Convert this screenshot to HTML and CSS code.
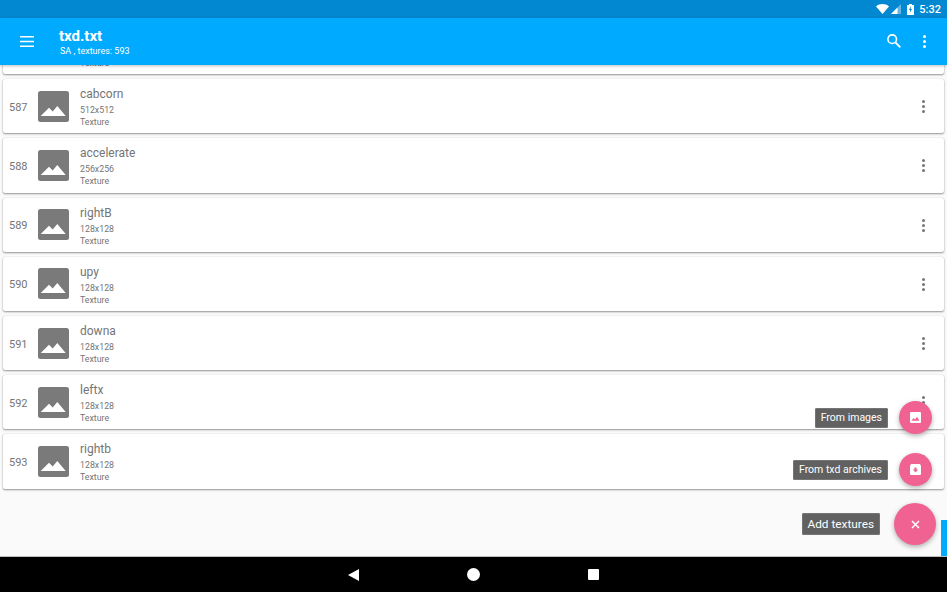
FILE: index.html
```html
<!DOCTYPE html>
<html lang="en">
<head>
    <meta charset="UTF-8">
    <title>txd.txt</title>
    <link rel="stylesheet" href="styles.css">
</head>
<body>
    <div class="statusBar">
        <svg class="wifi" width="13" height="10" viewBox="0 0 13 10"><path d="M0 2.400C1.800 .8 4 0 6.500 0S11.200 .8 13 2.400L6.500 10z" fill="#fff"/></svg>
        <svg class="signal" width="10" height="10" viewBox="0 0 10 10"><path d="M10 0v10H0z" fill="#fff" fill-opacity=".4"/><path d="M6.500 3.500V10H0z" fill="#fff"/></svg>
        <svg class="battery" width="7" height="11" viewBox="0 0 7 11"><path d="M2 0h3v1h2v10H0V1h2z" fill="#fff"/><path d="M4 2 2 6h1.200l-.4 3L5 5H3.700z" fill="#0288d1"/></svg>
        <span class="clock">5:32</span>
    </div>
    <header class="appBar">
        <a href="#" class="menuBtn">
            <svg width="14" height="11" viewBox="0 0 14 11"><path d="M0 0h14v1.600H0zM0 4.700h14v1.600H0zM0 9.400h14V11H0z" fill="#fff"/></svg>
        </a>
        <div class="appTitle">
            <h1>txd.txt</h1>
            <p>SA , textures: 593</p>
        </div>
        <a href="#" class="searchBtn">
            <svg width="14" height="14" viewBox="0 0 14 14"><circle cx="5.200" cy="5.200" r="4.300" fill="none" stroke="#fff" stroke-width="1.600"/><path d="M8.400 8.400 13.300 13.300" stroke="#fff" stroke-width="1.800"/></svg>
        </a>
        <a href="#" class="moreBtn"><span></span><span></span><span></span></a>
    </header>
    <main class="content">
        <ul class="textureList">
            <!-- scrolled under the app bar, only the last line shows -->
            <li class="card cutoff">
                <div class="info"><p>Texture</p></div>
            </li>
            <li class="card">
                <span class="num">587</span>
                <svg class="thumb" viewBox="0 0 31 31"><use href="#pic"/></svg>
                <div class="info"><h2>cabcorn</h2><p>512x512</p><p>Texture</p></div>
                <a href="#" class="moreBtn dark"><span></span><span></span><span></span></a>
            </li>
            <li class="card">
                <span class="num">588</span>
                <svg class="thumb" viewBox="0 0 31 31"><use href="#pic"/></svg>
                <div class="info"><h2>accelerate</h2><p>256x256</p><p>Texture</p></div>
                <a href="#" class="moreBtn dark"><span></span><span></span><span></span></a>
            </li>
            <li class="card">
                <span class="num">589</span>
                <svg class="thumb" viewBox="0 0 31 31"><use href="#pic"/></svg>
                <div class="info"><h2>rightB</h2><p>128x128</p><p>Texture</p></div>
                <a href="#" class="moreBtn dark"><span></span><span></span><span></span></a>
            </li>
            <li class="card">
                <span class="num">590</span>
                <svg class="thumb" viewBox="0 0 31 31"><use href="#pic"/></svg>
                <div class="info"><h2>upy</h2><p>128x128</p><p>Texture</p></div>
                <a href="#" class="moreBtn dark"><span></span><span></span><span></span></a>
            </li>
            <li class="card">
                <span class="num">591</span>
                <svg class="thumb" viewBox="0 0 31 31"><use href="#pic"/></svg>
                <div class="info"><h2>downa</h2><p>128x128</p><p>Texture</p></div>
                <a href="#" class="moreBtn dark"><span></span><span></span><span></span></a>
            </li>
            <li class="card">
                <span class="num">592</span>
                <svg class="thumb" viewBox="0 0 31 31"><use href="#pic"/></svg>
                <div class="info"><h2>leftx</h2><p>128x128</p><p>Texture</p></div>
                <a href="#" class="moreBtn dark"><span></span><span></span><span></span></a>
            </li>
            <li class="card">
                <span class="num">593</span>
                <svg class="thumb" viewBox="0 0 31 31"><use href="#pic"/></svg>
                <div class="info"><h2>rightb</h2><p>128x128</p><p>Texture</p></div>
                <a href="#" class="moreBtn dark"><span></span><span></span><span></span></a>
            </li>
        </ul>
        <div class="scrollThumb"></div>
        <div class="fabMenu">
            <div class="fabRow one">
                <span class="fabLabel">From images</span>
                <a href="#" class="fab"><svg width="11" height="11" viewBox="0 0 11 11"><path d="M1 0h9a1 1 0 0 1 1 1v9a1 1 0 0 1-1 1H1a1 1 0 0 1-1-1V1a1 1 0 0 1 1-1z" fill="#fff"/><path d="M1.500 8.800 3.600 6l1.500 1.500L7 4.800l2.500 4z" fill="#f06292"/></svg></a>
            </div>
            <div class="fabRow two">
                <span class="fabLabel">From txd archives</span>
                <a href="#" class="fab"><svg width="11" height="11" viewBox="0 0 11 11"><path d="M1.200 0h8.600L11 1.500V10a1 1 0 0 1-1 1H1a1 1 0 0 1-1-1V1.500z" fill="#fff"/><path d="M4.500 3.500h2V5.500H8.200L5.500 8.500 2.800 5.500h1.700z" fill="#f06292"/></svg></a>
            </div>
            <div class="fabRow main">
                <span class="fabLabel">Add textures</span>
                <a href="#" class="fab"><svg width="9" height="9" viewBox="0 0 9 9"><path d="M1 1l7 7M8 1 1 8" stroke="#fff" stroke-width="1.500"/></svg></a>
            </div>
        </div>
    </main>
    <nav class="navBar">
        <svg width="11" height="12" viewBox="0 0 11 12"><path d="M11 0v12L0 6z" fill="#fff"/></svg>
        <span class="navHome"></span>
        <span class="navRecent"></span>
    </nav>
    <svg class="hidden" width="0" height="0">
        <symbol id="pic" viewBox="0 0 31 31">
            <rect width="31" height="31" rx="2.500" fill="#7a7a7a"/>
            <path d="M2.700 25 11 16.700l3.700 3.800 4.600-5.500 8.400 10z" fill="#fff"/>
        </symbol>
    </svg>
</body>
</html>
```

FILE: styles.css
```css
/* reset */
* {box-sizing: border-box;}
body, h1, h2, p, ul {margin: 0; padding: 0;}
li {list-style: none;}
a {text-decoration: none;}
.hidden {position: absolute;}

body {
    display: flex;
    flex-direction: column;
    height: 592px;
    overflow: hidden;
    background: #fafafa;
    font-family: Roboto, "Liberation Sans", sans-serif;
    color: #757575;
}

/* status bar */
.statusBar {
    display: flex;
    justify-content: flex-end;
    align-items: center;
    flex: none;
    height: 18px;
    padding-right: 6px;
    background: #0288d1;
    color: #fff;
}
.wifi {margin-right: 2px;}
.signal {margin-right: 6px;}
.battery {margin-right: 5px;}
.clock {font-size: 11px; font-weight: 500;}

/* app bar */
.appBar {
    display: flex;
    align-items: center;
    position: relative;
    z-index: 2;
    flex: none;
    height: 47px;
    padding-left: 20px;
    background: #00aaff;
    color: #fff;
    box-shadow: 0 1px 3px rgba(0, 0, 0, .25);
}
.menuBtn {display: flex; width: 39px;}
.appTitle {flex: 1; padding-top: 2px;}
.appTitle h1 {font-size: 15px; line-height: 18px; font-weight: 700;}
.appTitle p {font-size: 9px; line-height: 13px; margin-left: 1px;}
.searchBtn {display: flex; margin-right: 22px; margin-bottom: 2px;}

.moreBtn {
    display: flex;
    flex-direction: column;
    gap: 2px;
    margin-right: 21px;
}
.moreBtn span {width: 3px; height: 3px; border-radius: 50%; background: #fff;}
.moreBtn.dark span {background: #757575;}

/* list */
.content {position: relative; flex: 1; min-height: 0; overflow: hidden;}
.textureList {margin-top: -45px; padding: 0 3px;}
.card {
    display: flex;
    align-items: center;
    height: 54.200px;
    margin-bottom: 5px;
    padding-left: 6px;
    background: #fff;
    border-radius: 2px;
    box-shadow: 0 1px 2px rgba(0, 0, 0, .4), 0 0 1px rgba(0, 0, 0, .2);
}
.card.cutoff {align-items: flex-end; padding-left: 77px; padding-bottom: 5px;}
.num {width: 29px; padding-top: 2px; font-size: 11px;}
.thumb {width: 31px; height: 31px; margin-right: 11px;}
.info {flex: 1; padding-top: 1px;}
.info h2 {font-size: 12px; line-height: 18px; font-weight: 400; margin-bottom: 1px;}
.info p {font-size: 8.800px; line-height: 12px;}
.card .moreBtn {margin-right: 19px; margin-top: 1px;}

/* floating menu */
.scrollThumb {position: absolute; right: 0; bottom: 0; width: 6px; height: 36px; background: #00aaff;}
.fabMenu {
    position: absolute;
    right: 11px;
    bottom: 11px;
    display: flex;
    flex-direction: column;
    align-items: flex-end;
}
.fabRow {display: flex; align-items: center;}
.fabLabel {
    padding: 0 5px;
    background: #616161;
    border: 1px solid #757575;
    border-radius: 1px;
    color: #fff;
    font-size: 10.500px;
    line-height: 18px;
    white-space: nowrap;
}
.fab {
    display: flex;
    justify-content: center;
    align-items: center;
    width: 33px;
    height: 33px;
    margin-left: 11px;
    margin-right: 4px;
    border-radius: 50%;
    background: #f06292;
    box-shadow: 0 2px 5px rgba(0, 0, 0, .3);
}
.fabRow.two {margin-top: 19px; margin-bottom: 17px;}
.fabRow.main .fabLabel {font-size: 11.800px; line-height: 20px;}
.fabRow.main .fab {width: 42px; height: 42px; margin-left: 14px; margin-right: 0;}

/* nav bar */
.navBar {
    display: flex;
    justify-content: center;
    align-items: center;
    gap: 108px;
    flex: none;
    height: 36px;
    background: #000;
    border-top: 1px solid #bdbdbd;
}
.navHome {width: 13px; height: 13px; border-radius: 50%; background: #fff;}
.navRecent {width: 11px; height: 11px; border-radius: 1px; background: #fff;}
```
